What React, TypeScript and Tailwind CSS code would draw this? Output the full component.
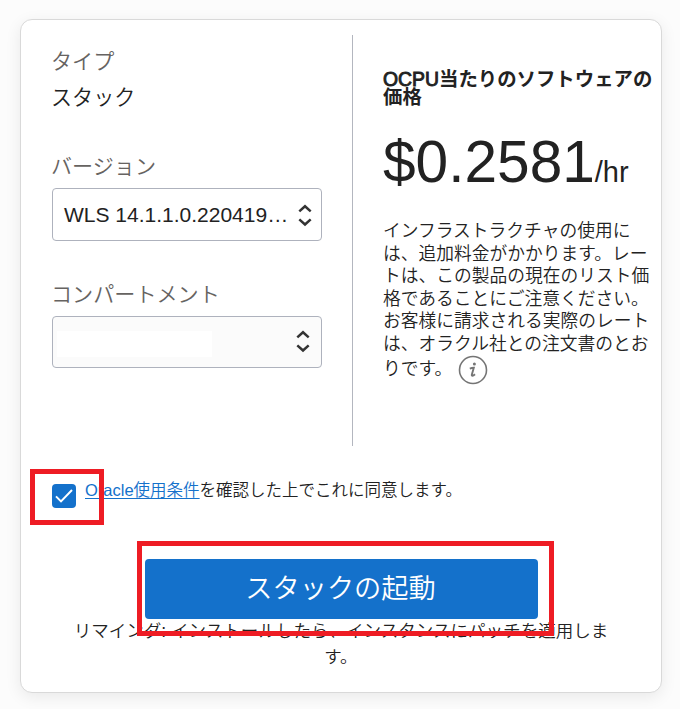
import type { ReactNode } from "react";

function SortArrows() {
  return (
    <svg width="14" height="24" viewBox="0 0 14 24" fill="none" stroke="#333" strokeWidth="2.5" className="shrink-0">
      <path d="M1.3 8.4 7 3.3l5.7 5.1" />
      <path d="M1.3 16.4 7 21.5l5.7-5.1" />
    </svg>
  );
}

function Label({ children }: { children: ReactNode }) {
  return <div className="-ml-px h-[30px] text-[21.1px] leading-[31px] whitespace-nowrap text-[#666361]">{children}</div>;
}

function InfoIcon() {
  return (
    <svg width="30" height="30" viewBox="0 0 30 30" fill="none" className="ml-[6px] inline-block align-middle">
      <circle cx="15" cy="15" r="13.5" stroke="#757575" strokeWidth="1.6" />
      <circle cx="16.4" cy="8.9" r="1.5" fill="#757575" />
      <path d="M11.8 13.6c1.3-.5 2.6-.8 4-.8l-2 6.9c-.3 1.3 1 1.5 3.2-.5" stroke="#757575" strokeWidth="1.9" />
    </svg>
  );
}

export default function App() {
  return (
    <div className="h-[709px] w-[680px] overflow-hidden bg-[#fcfcfc] pt-[19px] pl-5 font-['Liberation_Sans','Noto_Sans_CJK_JP',sans-serif] font-[350] text-[#222]">
      <div className="flex h-[674px] w-[642px] flex-col rounded-xl border border-[#d9d9d9] bg-white shadow-[0_4px_16px_rgba(0,0,0,0.08)]">
        <div className="flex h-[426px] pt-[15px]">
          <div className="flex w-[332px] shrink-0 flex-col border-r border-[#b3b6bf] pl-[31px]">
            <div className="pt-[11px]">
              <Label>タイプ</Label>
              <div className="mt-[6px] -ml-px h-[30px] text-[21.1px] leading-[31px]">スタック</div>
            </div>
            <div className="mt-[39px]">
              <Label>バージョン</Label>
              <div className="mt-[7px] flex h-[53px] w-[270px] items-center justify-between rounded border border-[#aeb2bd] bg-white pr-[9px] pl-[11px]">
                <span className="text-[21px] whitespace-nowrap">WLS 14.1.1.0.220419…</span>
                <SortArrows />
              </div>
            </div>
            <div className="mt-[38px]">
              <Label>コンパートメント</Label>
              <div className="mt-[7px] flex h-[52px] w-[270px] items-center justify-between rounded border border-[#aeb2bd] bg-[#fbfbfb] pr-[11px] pl-[4px]">
                <div className="mt-[4px] h-[26px] w-[155px] bg-white" />
                <div className="-mt-[2px]">
                  <SortArrows />
                </div>
              </div>
            </div>
          </div>
          <div className="w-[279px] shrink-0 pt-[35px] pl-[30px]">
            <h2 className="w-[280px] text-[19.4px] leading-[18px] font-bold whitespace-nowrap">
              <span className="font-normal [-webkit-text-stroke:0.9px_#222]">OCPU</span>
              当たりのソフトウェアの
              <br />
              価格
            </h2>
            <div className="mt-[23px] h-[66px] leading-[66px] whitespace-nowrap">
              <span className="text-[58.6px]">$0.2581</span>
              <span className="text-[29px]">/hr</span>
            </div>
            <p className="mt-[25px] text-[17.75px] leading-[22.5px] whitespace-nowrap">
              インフラストラクチャの使用に
              <br />
              は、追加料金がかかります。レー
              <br />
              トは、この製品の現在のリスト価
              <br />
              格であることにご注意ください。
              <br />
              お客様に請求される実際のレート
              <br />
              は、オラクル社との注文書のとお
              <br />
              りです。
              <InfoIcon />
            </p>
          </div>
        </div>
        <div className="relative mt-[38px] flex h-[24px] pl-[31px]">
          <span className="flex size-6 shrink-0 items-center justify-center rounded bg-[#1471cb]">
            <svg width="18" height="14" viewBox="0 0 18 14" fill="none" stroke="#fff" strokeWidth="2">
              <path d="M1 7.4 6 12.4 17 1" />
            </svg>
          </span>
          <div className="-mt-[5px] ml-[9px] text-[16.5px] leading-[22px] whitespace-nowrap">
            <a className="text-[#1471cb] underline decoration-1 underline-offset-[2px]">Oracle使用条件</a>を確認した上でこれに同意します。
          </div>
          <span className="absolute -top-[15px] left-[9px] h-[56px] w-[74px] border-[5px] border-[#ee1c24]" />
        </div>
        <div className="relative mt-[51px] ml-[124px] w-[393px]">
          <button className="h-[60px] w-full rounded bg-[#1471cb] pt-px pr-[2px] text-[27.2px] font-[350] text-white">スタックの起動</button>
          <span className="absolute -top-[18px] -left-[8px] z-10 h-[95px] w-[417px] border-[5px] border-[#ee1c24]" />
        </div>
        <p className="-mt-px text-center text-[17.55px] leading-[26px] whitespace-nowrap">
          リマインダ: インストールしたら、インスタンスにパッチを適用しま
          <br />
          す。
        </p>
      </div>
    </div>
  );
}
